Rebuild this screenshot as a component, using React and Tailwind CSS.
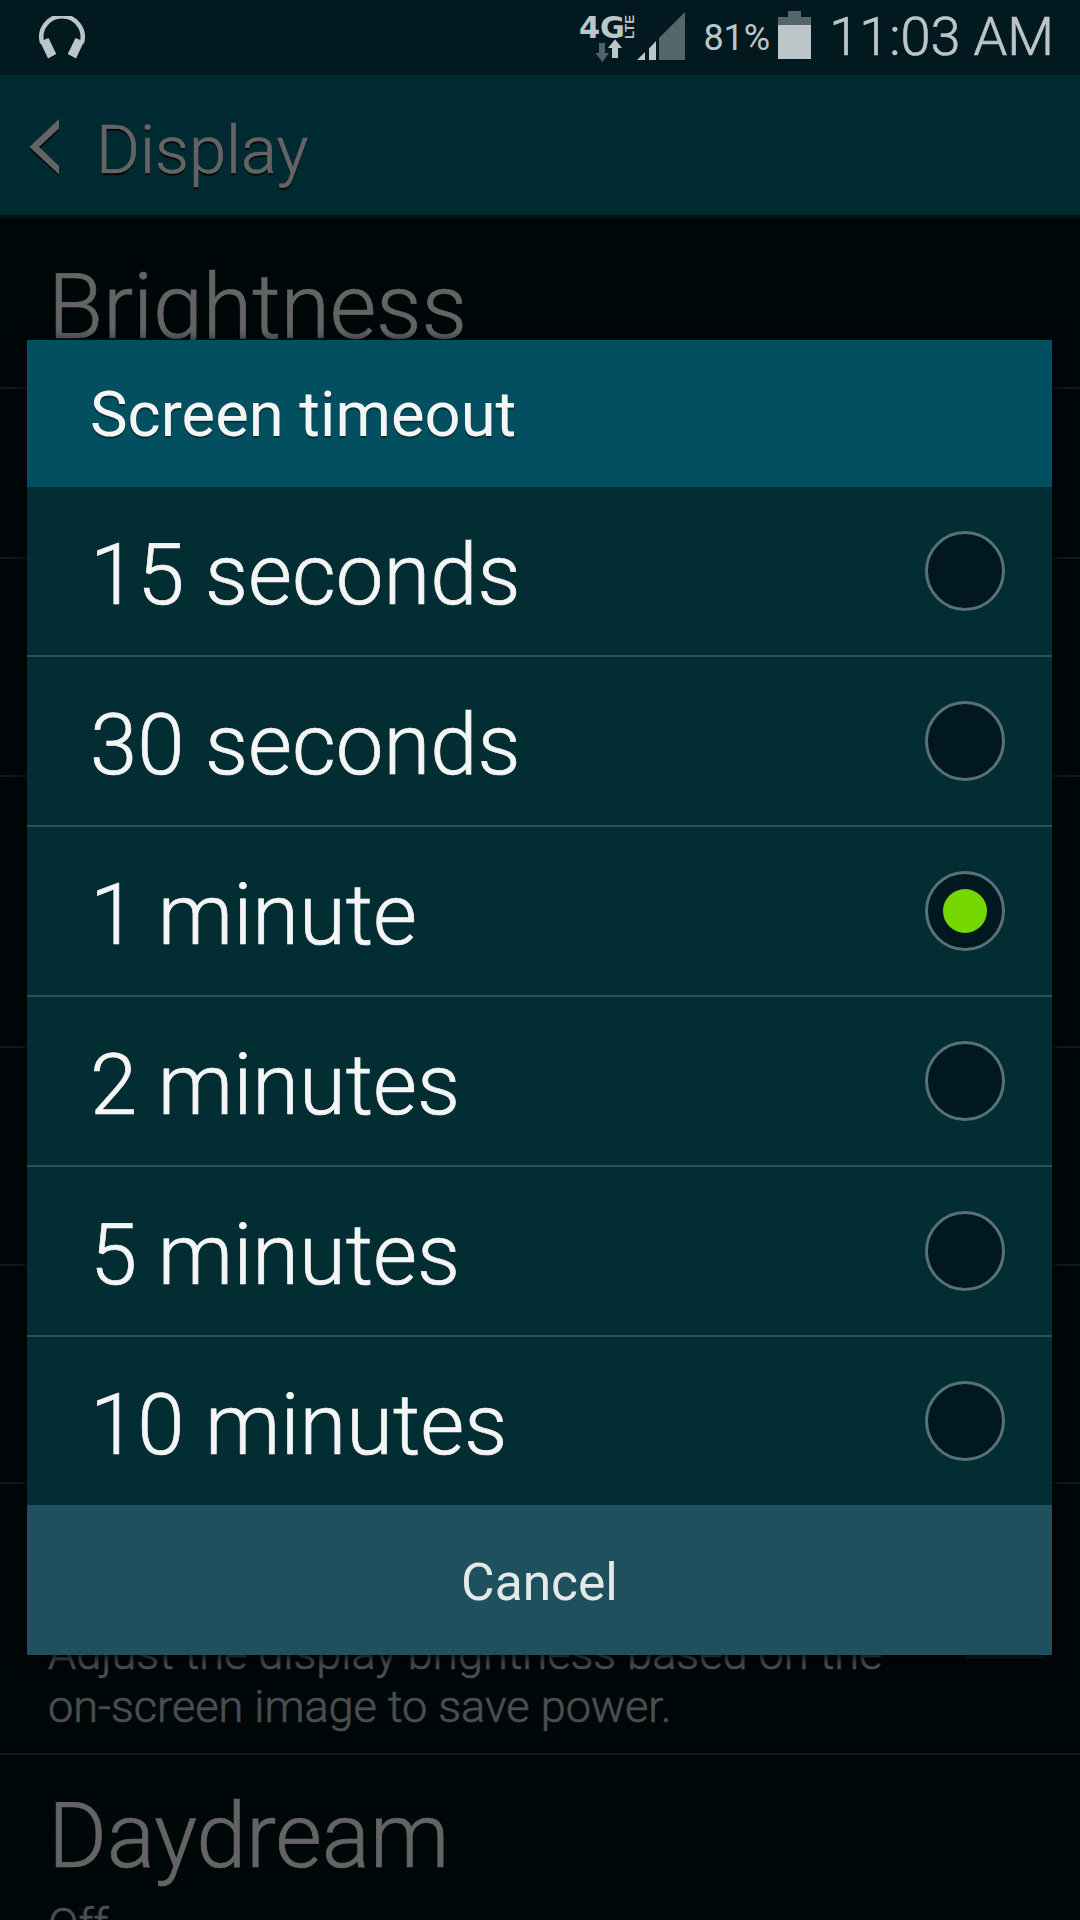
import { useState } from 'react'

const OPTIONS = [
  "15 seconds",
  "30 seconds",
  "1 minute",
  "2 minutes",
  "5 minutes",
  "10 minutes",
]

const ROW = "w-full shrink-0 border-b-2 border-[#10191c] px-12"
// light weight thickened a little, Roboto Light is too thin on its own
const LIGHT = "font-light [-webkit-text-stroke:0.7px_currentColor]"

function StatusBar() {
  return (
    <header className="flex h-[75px] shrink-0 items-center bg-[#01191f] pl-[39px] pr-[26px] text-[#bcc5c8]">
      <svg width="46" height="43" viewBox="39 16 46 43" className="mr-auto">
        <path d="M42.2 43 A20.7 20.7 0 1 1 81.8 43" fill="none" stroke="currentColor" strokeWidth="4.5" />
        <path d="M40 41.5 L48.5 38 L56.3 54 L48 58.5 Z" fill="currentColor" />
        <path d="M84 41.5 L75.5 38 L67.7 54 L76 58.5 Z" fill="currentColor" />
      </svg>

      {/* network type, data arrows and signal */}
      <svg width="106" height="75" viewBox="579 0 106 75" className="mr-[18px]">
        <text x="579" y="38" fontSize="30.5" textLength="46" lengthAdjust="spacingAndGlyphs" fill="currentColor" className="font-['DejaVu_Sans'] font-bold">4G</text>
        <text transform="translate(634 39) rotate(-90)" fontSize="13.5" textLength="24" lengthAdjust="spacingAndGlyphs" fill="currentColor" className="font-['Liberation_Sans'] font-bold">LTE</text>
        <path d="M599 43 H605 V53 H609 L602.3 62 L595.3 53 H599 Z" fill="#4f6469" />
        <path d="M612 58 V48 H608 L615 39.3 L622 48 H618 V58 Z" fill="currentColor" />
        <path d="M637 60 L645 52 V60 Z M649 60 V48.5 L656 41 V60 Z" fill="currentColor" />
        <path d="M659 60 V38 L685 12 V60 Z" fill="#546669" />
      </svg>

      <span className="mr-2 text-[36px] leading-none">81%</span>

      <svg width="33" height="75" viewBox="778 0 33 75" className="mr-[18px]">
        <path d="M788 11 H801 V17 H811 V25 H778 V17 H788 Z" fill="#546669" />
        <rect x="778" y="25" width="33" height="34" fill="currentColor" />
      </svg>

      <span className={`${LIGHT} pb-0.5 text-[54px] leading-none`}>11:03 AM</span>
    </header>
  )
}

function ActionBar() {
  return (
    <div className="flex h-36 shrink-0 items-center border-b-4 border-[#080f11] bg-[#002a31] pl-[29px] text-[#646464]">
      <svg width="31" height="58" viewBox="29 118 31 58" className="mt-[3px] mr-9">
        <path d="M59 121 V130 L39 149 L59 167.5 V176 L29.5 149 Z" fill="#000" />
        <path d="M59 119 V128.5 L39 147 L59 166 V174.5 L29.5 147 Z" fill="currentColor" />
      </svg>
      <h1 className={`${LIGHT} pt-2.5 text-[67px] leading-none [text-shadow:0_2px_1px_#000]`}>Display</h1>
    </div>
  )
}

export default function App() {
  const [selected, setSelected] = useState("1 minute")

  return (
    <div className="relative flex h-[1920px] w-[1080px] flex-col overflow-hidden bg-[#000709] font-['Roboto',sans-serif]">
      <StatusBar />
      <ActionBar />

      {/* settings list behind the dialog */}
      <main className="flex min-h-0 flex-1 flex-col overflow-hidden text-[#646464]">
        <div className={`${ROW} flex h-[170px] items-center pt-[9px]`}>
          <h2 className={`${LIGHT} text-[90px] leading-none tracking-[-0.25px]`}>Brightness</h2>
        </div>
        <div className={`${ROW} h-[170px]`} />
        <div className={`${ROW} h-[218px]`} />
        <div className={`${ROW} h-[271px]`} />
        <div className={`${ROW} h-[218px]`} />
        <div className={`${ROW} h-[218px]`} />
        <div className={`${ROW} flex h-[271px] items-center justify-between`}>
          <p className={`${LIGHT} self-end pb-5 text-[45.1px] leading-[53px] text-[#4a4e50]`}>
            Adjust the display brightness based on the
            <br />
            on-screen image to save power.
          </p>
          <div className="-mr-[13px] size-20 shrink-0 bg-[#141f22]" />
        </div>
        <div className="w-full shrink-0 px-12 pt-[37px]">
          <h2 className={`${LIGHT} text-[90px] leading-none tracking-[-0.2px]`}>Daydream</h2>
          <p className={`${LIGHT} mt-4 text-[45.1px] leading-[53px] text-[#4a4e50]`}>Off</p>
        </div>
      </main>

      {/* dialog */}
      <section className="absolute left-[27px] top-[340px] flex w-[1025px] flex-col text-[#f5f5f5] shadow-[0_2px_12px_#000]">
        <h2 className="flex h-[147px] items-center bg-[#02505f] pl-[63px] pt-[3px] text-[63.3px] leading-none [text-shadow:0_2px_1px_#03303a]">
          Screen timeout
        </h2>
        <ul className="divide-y-2 divide-[#2a5158] bg-[#012d33]">
          {OPTIONS.map((option, i) => (
            <li
              key={option}
              className={`flex cursor-pointer items-center justify-between pl-[63px] pr-[47px] ${i === OPTIONS.length - 1 ? "h-[168px]" : "h-[170px]"}`}
              onClick={() => setSelected(option)}
            >
              <span className={`${LIGHT} pt-2 text-[85px] leading-none`}>{option}</span>
              <span className="flex size-20 items-center justify-center rounded-full border-3 border-[#577176] bg-[#01181e]">
                {selected === option && <span className="size-11 rounded-full bg-[#75d700]" />}
              </span>
            </li>
          ))}
        </ul>
        <button className="h-[150px] bg-[#1e515d] pt-1.5 text-[51.5px] leading-none text-[#e6e9ea]">Cancel</button>
      </section>
    </div>
  )
}
